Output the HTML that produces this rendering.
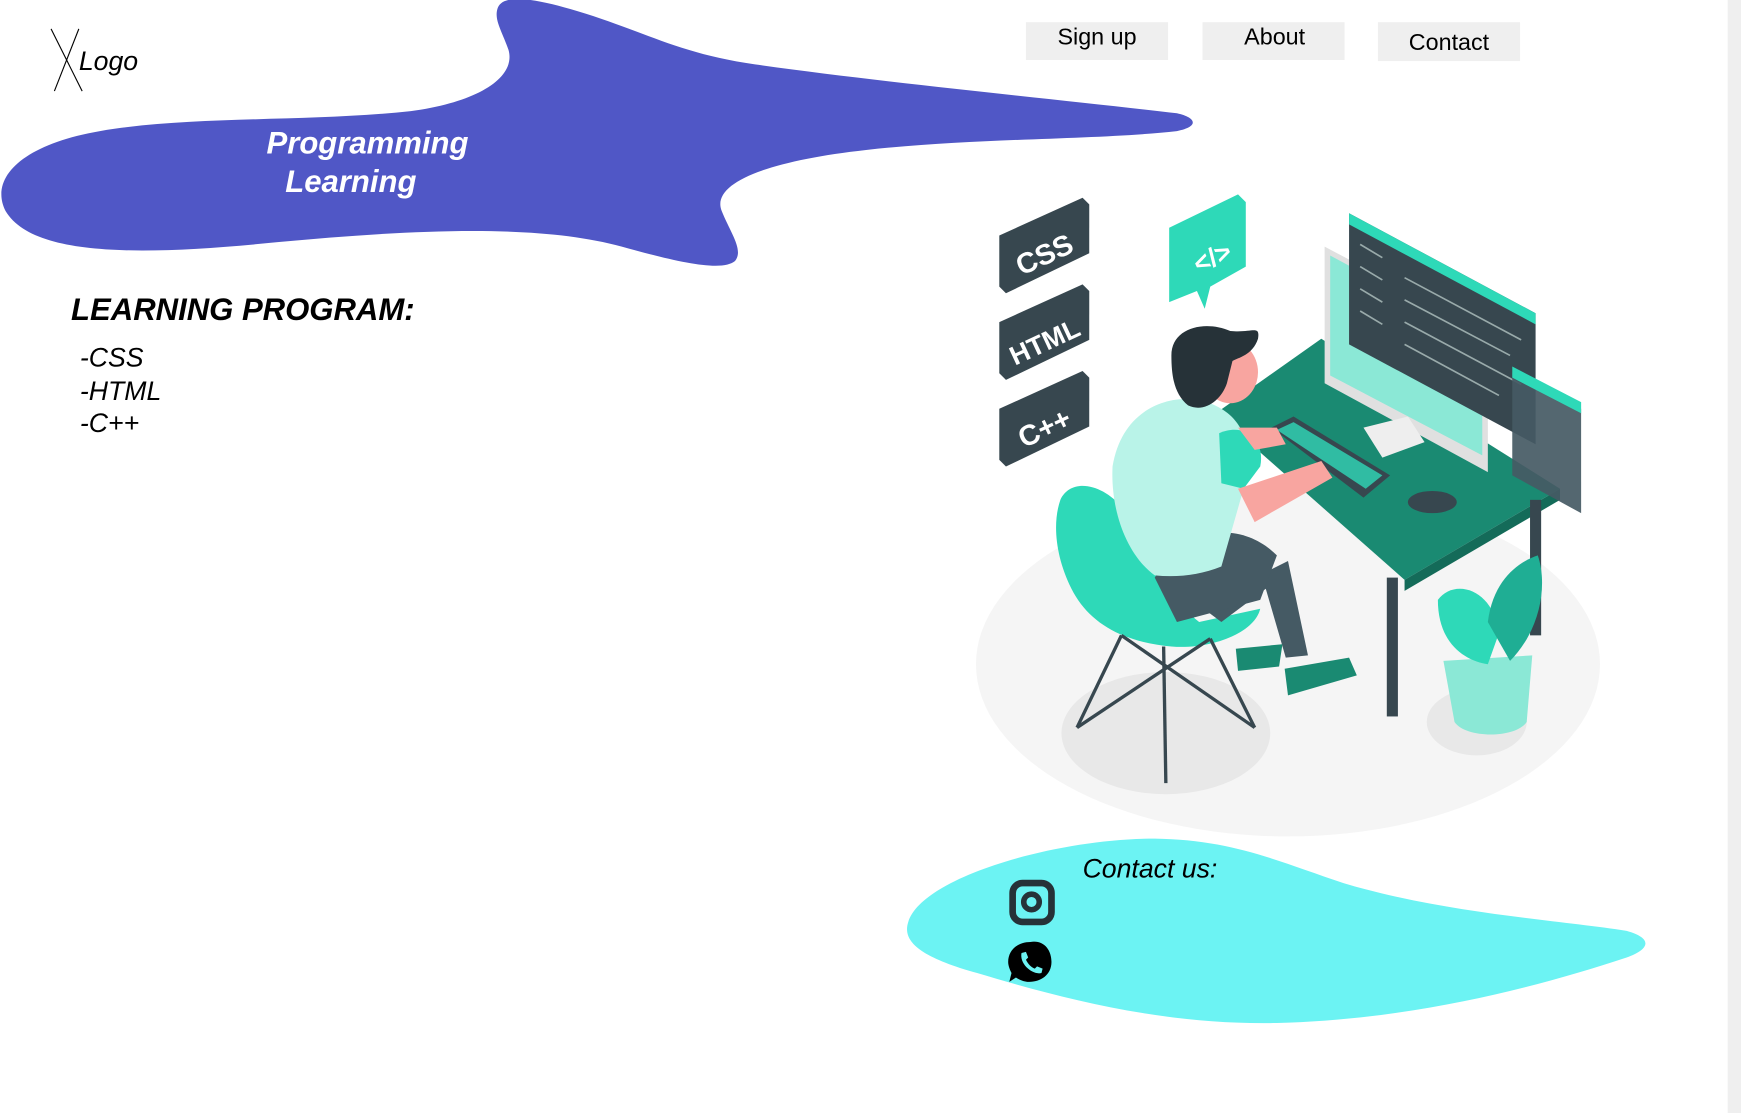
<!DOCTYPE html>
<html><head><meta charset="utf-8"><style>
html,body{margin:0;padding:0;background:#fff;overflow:hidden;width:1741px;height:1113px}
svg{display:block}
text{font-family:"Liberation Sans",sans-serif}
</style></head><body>
<svg width="1741" height="1113" viewBox="0 0 1568 1002" preserveAspectRatio="none">
<rect x="1556" y="0" width="12" height="1002" fill="#efefef"/>
<!-- purple blob -->
<path d="M448,8 C452,-6 480,-2 520,10 C580,28 610,48 680,58 C800,75 960,90 1060,102 C1078,106 1080,114 1060,118 C990,126 880,124 780,135 C690,145 640,165 650,190 C658,210 670,225 662,235 C650,245 610,236 560,222 C480,200 360,208 250,218 C130,230 30,232 5,190 C-10,160 20,130 90,118 C170,104 280,110 370,100 C430,92 465,70 458,45 C452,28 445,18 448,8 Z" fill="#5057c6"/>
<!-- logo -->
<line x1="46" y1="26" x2="74" y2="82" stroke="#000" stroke-width="1"/>
<line x1="71" y1="26" x2="49" y2="82" stroke="#000" stroke-width="1"/>
<text x="71" y="63" font-size="24" font-style="italic">Logo</text>
<text x="331" y="138" font-size="28" font-weight="bold" font-style="italic" fill="#fff" text-anchor="middle">Programming</text>
<text x="316" y="173" font-size="28" font-weight="bold" font-style="italic" fill="#fff" text-anchor="middle">Learning</text>
<!-- nav -->
<rect x="924" y="20" width="128" height="34" fill="#efefef"/>
<rect x="1083" y="20" width="128" height="34" fill="#efefef"/>
<rect x="1241" y="20" width="128" height="35" fill="#efefef"/>
<text x="988" y="40" font-size="21" text-anchor="middle">Sign up</text>
<text x="1148" y="40" font-size="21" text-anchor="middle">About</text>
<text x="1305" y="45" font-size="21" text-anchor="middle">Contact</text>
<!-- learning -->
<text x="64" y="288" font-size="28" font-weight="bold" font-style="italic">LEARNING PROGRAM:</text>
<text x="72" y="330" font-size="24" font-style="italic">-CSS</text>
<text x="72" y="360" font-size="24" font-style="italic">-HTML</text>
<text x="72" y="389" font-size="24" font-style="italic">-C++</text>
<!-- illustration -->
<ellipse cx="1160" cy="598" rx="281" ry="155" fill="#f5f5f5"/>
<ellipse cx="1050" cy="660" rx="94" ry="55" fill="#e8e8e8"/>
<ellipse cx="1330" cy="650" rx="45" ry="30" fill="#e8e8e8"/>
<!-- tags -->
<g>
<polygon points="900,212 975,178 981,184 981,228 906,264 900,258" fill="#37474f"/>
<polygon points="900,290 975,256 981,262 981,306 906,342 900,336" fill="#37474f"/>
<polygon points="900,368 975,334 981,340 981,384 906,420 900,414" fill="#37474f"/>
<text x="941" y="238" font-size="26" font-weight="bold" fill="#fff" text-anchor="middle" transform="rotate(-25 941 230)">CSS</text>
<text x="941" y="316" font-size="24" font-weight="bold" fill="#fff" text-anchor="middle" transform="rotate(-25 941 308)">HTML</text>
<text x="941" y="394" font-size="26" font-weight="bold" fill="#fff" text-anchor="middle" transform="rotate(-25 941 386)">C++</text>
</g>
<polygon points="1053,205 1115,175 1122,182 1122,240 1090,258 1085,278 1078,262 1053,272" fill="#2ed9b8"/>
<text x="1092" y="240" font-size="24" font-weight="bold" fill="#fff" text-anchor="middle" transform="rotate(-25 1092 232)">&lt;/&gt;</text>
<!-- desk -->
<polygon points="1095,372 1190,305 1405,440 1265,522 " fill="#1a8a72"/>
<polygon points="1265,522 1405,440 1405,450 1265,532" fill="#146b59"/>
<rect x="1249" y="520" width="10" height="125" fill="#37474f"/>
<rect x="1378" y="450" width="10" height="122" fill="#37474f"/>
<!-- monitors -->
<polygon points="1193,222 1340,300 1340,425 1193,345" fill="#e0e0e0"/>
<polygon points="1198,230 1335,304 1335,410 1198,338" fill="#8be8d6"/>
<polygon points="1215,192 1383,282 1383,400 1215,310" fill="#37474f"/>
<polygon points="1215,192 1383,282 1383,292 1215,202" fill="#2ed9b8"/>
<g stroke="#9aa" stroke-width="1.5">
<line x1="1225" y1="220" x2="1245" y2="232"/><line x1="1225" y1="240" x2="1245" y2="252"/><line x1="1225" y1="260" x2="1245" y2="272"/><line x1="1225" y1="280" x2="1245" y2="292"/>
<line x1="1265" y1="250" x2="1370" y2="306"/><line x1="1265" y1="270" x2="1360" y2="320"/><line x1="1265" y1="290" x2="1370" y2="346"/><line x1="1265" y1="310" x2="1350" y2="356"/>
</g>
<polygon points="1228,385 1268,375 1283,398 1245,412" fill="#eeeeee"/>
<polygon points="1362,335 1424,368 1424,462 1362,428" fill="#455a64" opacity="0.92"/>
<polygon points="1362,330 1424,362 1424,372 1362,340" fill="#2ed9b8"/>
<!-- keyboard, mouse -->
<polygon points="1145,385 1165,375 1252,428 1228,448" fill="#37474f"/>
<polygon points="1150,387 1165,380 1245,428 1230,440" fill="#2ed9b8" opacity="0.8"/>
<ellipse cx="1290" cy="452" rx="22" ry="10" fill="#37474f"/>
<!-- chair -->
<path d="M955,450 C965,428 1000,435 1020,470 C1040,510 1055,540 1080,560 L1135,548 C1130,570 1090,585 1055,582 C1010,578 980,560 965,530 C950,500 948,470 955,450 Z" fill="#2ed9b8"/>
<g stroke="#37474f" stroke-width="3">
<line x1="1010" y1="572" x2="970" y2="655"/><line x1="1048" y1="582" x2="1050" y2="705"/><line x1="1090" y1="575" x2="1130" y2="655"/><line x1="1010" y1="572" x2="1130" y2="655"/><line x1="1090" y1="575" x2="970" y2="655"/>
</g>
<!-- person -->
<path d="M1080,545 L1160,505 L1178,590 L1158,592 L1140,530 L1100,560 Z" fill="#455a64"/>
<path d="M1040,520 C1070,470 1120,470 1150,500 L1135,540 L1060,560 Z" fill="#455a64"/>
<path d="M1002,420 C1010,370 1050,355 1080,360 C1120,370 1130,400 1120,440 L1100,510 C1080,518 1060,520 1040,518 C1015,500 1000,460 1002,420 Z" fill="#b9f3e8"/>
<path d="M1098,390 C1120,380 1140,395 1135,420 L1120,440 L1100,435 Z" fill="#2ed9b8"/>
<path d="M1115,440 L1190,415 L1200,430 L1130,470 Z" fill="#f8a5a0"/>
<path d="M1115,385 L1150,385 L1158,400 L1130,405 Z" fill="#f8a5a0"/>
<ellipse cx="1108" cy="335" rx="25" ry="28" fill="#f8a5a0"/>
<path d="M1055,320 C1055,295 1085,288 1108,298 C1128,300 1135,292 1133,305 C1128,320 1115,322 1110,325 L1105,345 C1100,360 1085,372 1070,365 C1058,355 1055,340 1055,320 Z" fill="#263238"/>
<path d="M1113,584 L1155,580 L1152,600 L1115,604 Z" fill="#1a8a72"/>
<path d="M1157,602 L1215,592 L1222,608 L1160,626 Z" fill="#1a8a72"/>
<!-- plant -->
<path d="M1300,595 L1380,590 L1375,650 C1365,665 1320,665 1310,650 Z" fill="#8be8d6"/>
<path d="M1295,540 C1310,520 1345,530 1350,570 L1340,598 C1320,595 1295,580 1295,540 Z" fill="#2ed9b8"/>
<path d="M1340,560 C1345,520 1370,505 1385,500 C1395,530 1385,570 1360,595 Z" fill="#1fae94"/>
<!-- contact blob -->
<path d="M818,830 C830,790 950,755 1040,755 C1110,756 1150,775 1210,795 C1300,822 1400,828 1465,838 C1490,845 1485,855 1465,862 C1380,890 1270,918 1150,921 C1050,923 960,900 880,876 C830,862 812,848 818,830 Z" fill="#6cf3f3"/>
<text x="975" y="790" font-size="24" font-style="italic">Contact us:</text>
<rect x="912" y="795" width="35" height="35" rx="9" fill="none" stroke="#263238" stroke-width="6"/>
<circle cx="929" cy="812" r="7" fill="none" stroke="#263238" stroke-width="5"/>
<path d="M928,848 C940,846 947,855 947,866 C947,878 937,884 927,884 C922,884 918,882 915,880 L909,884 L911,876 C909,872 908,869 908,866 C908,855 917,848 928,848 Z" fill="#000"/>
<path d="M920,858 L924,857 L926,862 L924,864 C926,868 929,871 932,872 L934,870 L939,872 L938,876 C930,878 918,868 920,858 Z" fill="#6cf3f3"/>
</svg>
</body></html>
